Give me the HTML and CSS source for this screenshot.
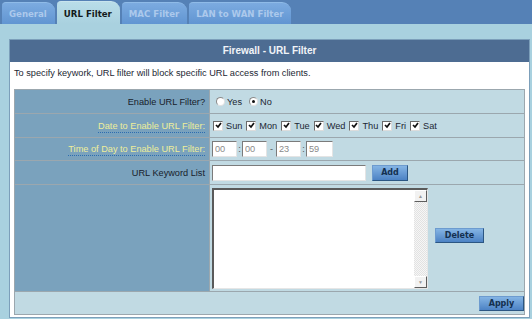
FILE: index.html
```html
<!DOCTYPE html>
<html>
<head>
  <meta charset="utf-8">
  <title>Firewall - URL Filter</title>
  <link rel="stylesheet" href="styles.css">
</head>
<body>
  <nav class="tabs">
    <a class="tab">General</a>
    <a class="tab active">URL Filter</a>
    <a class="tab">MAC Filter</a>
    <a class="tab">LAN to WAN Filter</a>
  </nav>

  <main class="content">
    <section class="panel">
      <div class="panel-title">Firewall - URL Filter</div>
      <div class="panel-body">
        <p class="desc">To specify keywork, URL filter will block specific URL access from clients.</p>

        <table class="form">
          <tr class="r1">
            <th>Enable URL Filter?</th>
            <td>
              <div class="line">
                <label class="opt"><span class="radio"></span>Yes</label>
                <label class="opt"><span class="radio on"></span>No</label>
              </div>
            </td>
          </tr>
          <tr class="r2">
            <th><span class="hint">Date to Enable URL Filter:</span></th>
            <td>
              <div class="line">
                <label class="opt"><span class="check"><svg viewBox="0 0 7 7"><path d="M1 3 L3 5 L6 1" /></svg></span>Sun</label>
                <label class="opt"><span class="check"><svg viewBox="0 0 7 7"><path d="M1 3 L3 5 L6 1" /></svg></span>Mon</label>
                <label class="opt"><span class="check"><svg viewBox="0 0 7 7"><path d="M1 3 L3 5 L6 1" /></svg></span>Tue</label>
                <label class="opt"><span class="check"><svg viewBox="0 0 7 7"><path d="M1 3 L3 5 L6 1" /></svg></span>Wed</label>
                <label class="opt"><span class="check"><svg viewBox="0 0 7 7"><path d="M1 3 L3 5 L6 1" /></svg></span>Thu</label>
                <label class="opt"><span class="check"><svg viewBox="0 0 7 7"><path d="M1 3 L3 5 L6 1" /></svg></span>Fri</label>
                <label class="opt"><span class="check"><svg viewBox="0 0 7 7"><path d="M1 3 L3 5 L6 1" /></svg></span>Sat</label>
              </div>
            </td>
          </tr>
          <tr class="r3">
            <th><span class="hint">Time of Day to Enable URL Filter:</span></th>
            <td>
              <div class="line">
                <input class="field small" value="00">
                <span class="sep">:</span>
                <input class="field small" value="00">
                <span class="sep dash">-</span>
                <input class="field small" value="23">
                <span class="sep">:</span>
                <input class="field small last" value="59">
              </div>
            </td>
          </tr>
          <tr class="r4">
            <th>URL Keyword List</th>
            <td>
              <div class="line">
                <input class="field keyword">
                <button class="btn add">Add</button>
              </div>
            </td>
          </tr>
          <tr class="r5">
            <th></th>
            <td>
              <div class="line">
                <div class="listbox">
                  <textarea></textarea>
                  <div class="scroll">
                    <span class="sbtn">&#9650;</span>
                    <span class="track"></span>
                    <span class="sbtn">&#9660;</span>
                  </div>
                </div>
                <button class="btn del">Delete</button>
              </div>
            </td>
          </tr>
          <tr class="r6">
            <td colspan="2" class="foot">
              <button class="btn apply">Apply</button>
            </td>
          </tr>
        </table>
      </div>
    </section>
  </main>
</body>
</html>
```

FILE: styles.css
```css
* {
  box-sizing: border-box;
}

body {
  margin: 0;
  background-color: #a9d1df;
  font-family: "Liberation Sans", Arial, sans-serif;
  font-size: 9.2px;
  color: #1c2733;
}

/* tab strip */
.tabs {
  display: flex;
  align-items: flex-end;
  gap: 2px;
  height: 24px;
  padding-left: 2px;
  background-color: #5581b6;
}

.tab {
  display: flex;
  align-items: center;
  justify-content: center;
  height: 22px;
  padding: 1px 8px 0 7px;
  border-radius: 4px 9px 0 0;
  background: linear-gradient(#7cabe0, #6195d2);
  border-top: 1px solid #8fbbe8;
  color: #acc9ec;
  font-family: "DejaVu Sans", Verdana, sans-serif;
  font-weight: bold;
  font-size: 8.6px;
}

.tab.active {
  height: 23px;
  background: linear-gradient(#b9dde9, #a9d1df);
  border-top-color: #c8e4ee;
  color: #141a20;
}

.content {
  padding: 15px 2px 0 9px;
}

.panel {
  width: 521px;
  border: 1px solid #7c9fba;
  background-color: white;
}

.panel-title {
  height: 22px;
  line-height: 22px;
  text-align: center;
  background-color: #4d6c92;
  color: #f1f4f8;
  font-weight: bold;
  font-size: 10px;
}

.panel-body {
  padding: 0 4px 2px 4px;
}

.desc {
  margin: 0;
  padding: 5px 0 10px 0;
  line-height: 12px;
}

/* form table */
.form {
  width: 511px;
  border-collapse: collapse;
  border: 1px solid #a3acb2;
}

.form th,
.form td {
  padding: 0;
  border: 1px solid #9ba7ae;
}

.form th {
  width: 195px;
  padding-right: 4px;
  text-align: right;
  font-weight: normal;
  background-color: #7aa2bd;
  color: #17212b;
}

.form td {
  padding-left: 2px;
  background-color: #c1dae3;
}

.r1 th, .r1 td { height: 24px; }
.r2 th, .r2 td { height: 24px; }
.r3 th, .r3 td { height: 23px; }
.r4 th, .r4 td { height: 24px; }
.r5 th, .r5 td { height: 107px; }
.r6 td { height: 23px; }

.hint {
  color: #eeee9a;
  border-bottom: 1px dotted #2d6db0;
  padding-bottom: 1px;
}

.line {
  display: flex;
  align-items: center;
}

.opt {
  display: flex;
  align-items: center;
  gap: 2px;
  margin-right: 6px;
}

.r1 .opt {
  margin-left: 4px;
  margin-right: 3px;
}

.r2 .opt {
  gap: 3px;
  margin-left: 1px;
  margin-right: 3px;
}

.radio {
  width: 9px;
  height: 9px;
  border-radius: 50%;
  border: 1px solid #8a8a8a;
  border-right-color: #e0e0e0;
  border-bottom-color: #e0e0e0;
  background-color: white;
  display: flex;
  align-items: center;
  justify-content: center;
}

.radio.on::after {
  content: "";
  width: 3px;
  height: 3px;
  border-radius: 50%;
  background-color: #111;
}

.check {
  width: 10px;
  height: 10px;
  border: 1px solid #6a6a6a;
  border-right-color: #dcdcdc;
  border-bottom-color: #dcdcdc;
  background-color: white;
  display: flex;
  align-items: center;
  justify-content: center;
}

.check svg {
  width: 7px;
  height: 7px;
  fill: none;
  stroke: #111;
  stroke-width: 1.7;
}

.field {
  height: 16px;
  border: 1px solid #7b7b7b;
  border-right-color: #e4e4e4;
  border-bottom-color: #e4e4e4;
  background-color: white;
  font-family: "Liberation Sans", Arial, sans-serif;
  font-size: 9.2px;
  color: #8a8a8a;
  padding: 0 2px;
}

.small {
  width: 25px;
}

.small.last {
  width: 27px;
}

.sep {
  width: 5px;
  text-align: center;
  color: #555;
}

.sep.dash {
  width: 9px;
}

.keyword {
  width: 154px;
}

.btn {
  height: 16px;
  padding: 0;
  border: 1px solid #2b5683;
  border-top-color: #6d9bcf;
  border-left-color: #6d9bcf;
  background: linear-gradient(#84b4e4, #4c82c4);
  color: #14304f;
  font-family: "DejaVu Sans", Verdana, sans-serif;
  font-weight: bold;
  font-size: 8px;
}

.add {
  width: 36px;
  margin-left: 6px;
}

.del {
  width: 49px;
  height: 15px;
  margin-left: 7px;
  margin-bottom: 5px;
}

.apply {
  width: 45px;
  height: 15px;
}

.foot {
  text-align: right;
  padding-right: 5px;
}

.listbox {
  display: flex;
  width: 216px;
  height: 101px;
  border: 2px solid #5a5a5a;
  border-right: 1px solid #e6e6e6;
  border-bottom: 1px solid #e6e6e6;
  background-color: white;
}

.listbox textarea {
  flex-grow: 1;
  border: none;
  resize: none;
  outline: none;
  overflow: hidden;
}

.scroll {
  display: flex;
  flex-direction: column;
  width: 13px;
}

.sbtn {
  height: 12px;
  display: flex;
  align-items: center;
  justify-content: center;
  font-size: 5px;
  color: #999;
  background-color: #f2f2f2;
  border: 1px solid #fff;
  border-right-color: #5e5e5e;
  border-bottom-color: #5e5e5e;
}

.track {
  flex-grow: 1;
  background: repeating-conic-gradient(#f6f6f6 0 25%, #e2e2e2 0 50%) 0 0 / 2px 2px;
}
```
